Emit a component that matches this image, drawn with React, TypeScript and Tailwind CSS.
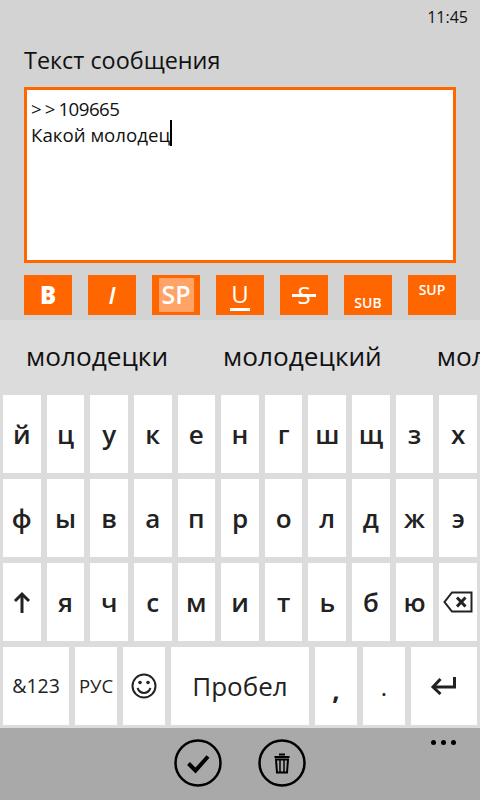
const rows = [
  ['й', 'ц', 'у', 'к', 'е', 'н', 'г', 'ш', 'щ', 'з', 'х'],
  ['ф', 'ы', 'в', 'а', 'п', 'р', 'о', 'л', 'д', 'ж', 'э'],
]
const row3 = ['я', 'ч', 'с', 'м', 'и', 'т', 'ь', 'б', 'ю']

function Key({ children, className = 'text-[26px] font-[550]' }: { children?: React.ReactNode; className?: string }) {
  return (
    <div className={`flex h-[78px] items-center justify-center bg-white leading-none text-[#222] ${className}`}>
      {children}
    </div>
  )
}

function ShiftIcon() {
  return (
    <svg width="18" height="22" viewBox="0 0 18 22" fill="none" stroke="#222" strokeWidth="3">
      <path d="M9 22V3" />
      <path d="M2 10l7-7 7 7" />
    </svg>
  )
}

function BackspaceIcon() {
  return (
    <svg width="30" height="22" viewBox="0 0 30 22" fill="none" stroke="#222" strokeWidth="2">
      <path d="M9 1.500H28.500V20.500H9L1.500 11z" />
      <path d="M14 6.500l8.500 9M22.500 6.500l-8.500 9" strokeWidth="3" />
    </svg>
  )
}

function SmileIcon() {
  return (
    <svg width="26" height="26" viewBox="0 0 26 26" fill="none" stroke="#222" strokeWidth="2">
      <circle cx="13" cy="13" r="11.500" />
      <path d="M6.500 15c1.500 3.500 4 5 6.500 5s5-1.500 6.500-5" />
      <circle cx="9" cy="9.500" r="1.800" fill="#222" stroke="none" />
      <circle cx="17" cy="9.500" r="1.800" fill="#222" stroke="none" />
    </svg>
  )
}

function EnterIcon() {
  return (
    <svg width="26" height="18" viewBox="0 0 26 18" fill="none" stroke="#222" strokeWidth="3">
      <path d="M24.500 0v10H3" />
      <path d="M10.500 2L3 10l7.500 7" />
    </svg>
  )
}

function CheckIcon() {
  return (
    <svg width="48" height="48" viewBox="0 0 48 48" fill="none" stroke="#000">
      <circle cx="24" cy="24" r="22.500" strokeWidth="2.500" />
      <path d="M14.500 24.500l7 7L34 17.500" strokeWidth="4" />
    </svg>
  )
}

function TrashIcon() {
  return (
    <svg width="48" height="48" viewBox="0 0 48 48" fill="none" stroke="#000">
      <circle cx="24" cy="24" r="22.500" strokeWidth="2.500" />
      <path d="M16.500 18h15M21 15.500h6" strokeWidth="2" />
      <path d="M18 20.500h12l-1 13h-10z" strokeWidth="2" />
      <path d="M22 21v12M26 21v12" strokeWidth="1.500" />
    </svg>
  )
}

export default function App() {
  return (
    <div className="flex h-[800px] w-[480px] flex-col overflow-hidden bg-[#d3d3d3] font-['Open_Sans',sans-serif] text-black">
      <div className="flex h-[32px] items-center justify-end pr-[12px] pt-[1px] text-[16px] text-[#111]">11:45</div>

      <div className="flex flex-1 flex-col px-[24px]">
        <div className="mt-[12px] h-[32px] text-[23.400px] leading-[32px] text-[#111]">Текст сообщения</div>
        <div className="mt-[11px] h-[176px] border-[3px] border-[#ff6600] bg-white px-[4px] py-[6px] text-[18.700px] leading-[26px] text-[#111]">
          <div>
            <span className="tracking-[3px]">&gt;&gt;</span>
            <span className="tracking-[-0.500px]">109665</span>
          </div>
          <div className="flex items-center">
            Какой молодец
            <span className="-mt-[4px] h-[26px] w-[2px] bg-black" />
          </div>
        </div>

        <div className="mt-[12px] flex justify-between">
          <div className="flex h-[40px] w-[48px] items-center justify-center bg-[#ff6600] text-[24px] font-extrabold text-white">B</div>
          <div className="flex h-[40px] w-[48px] items-center justify-center bg-[#ff6600] text-[24px] font-semibold italic text-white">I</div>
          <div className="flex h-[40px] w-[48px] items-center justify-center bg-[#ff6600]">
            <div className="flex h-[34px] w-[35px] items-center justify-center bg-white/40 text-[25px] font-semibold text-white">SP</div>
          </div>
          <div className="flex h-[40px] w-[48px] items-center justify-center bg-[#ff6600] text-[24px] font-medium text-white">
            <span className="border-b-[3px] border-white px-[1px] leading-[29px]">U</span>
          </div>
          <div className="relative flex h-[40px] w-[48px] items-center justify-center bg-[#ff6600] text-[24px] font-medium text-white">
            S
            <span className="absolute left-[12px] top-[19px] h-[3px] w-[24px] bg-white" />
          </div>
          <div className="flex h-[40px] w-[48px] items-end justify-center bg-[#ff6600] pb-[2px] text-[14px] font-semibold text-white">SUB</div>
          <div className="flex h-[40px] w-[48px] items-start justify-center bg-[#ff6600] pt-[4px] text-[14px] font-semibold text-white">SUP</div>
        </div>
      </div>

      <div className="flex h-[408px] flex-col bg-[#dcdcdc]">
        <div className="flex h-[75px] items-center gap-[55px] overflow-hidden whitespace-nowrap pb-[2px] pl-[26px] text-[26.200px] leading-none text-[#111]">
          <span>молодецки</span>
          <span>молодецкий</span>
          <span>мол</span>
        </div>
        <div className="flex flex-col gap-[6px] px-[3px]">
          {rows.map((row, i) => (
            <div key={i} className="grid grid-cols-11 gap-[6px]">
              {row.map((k) => (
                <Key key={k}>{k}</Key>
              ))}
            </div>
          ))}
          <div className="grid grid-cols-11 gap-[6px]">
            <Key><ShiftIcon /></Key>
            {row3.map((k) => (
              <Key key={k}>{k}</Key>
            ))}
            <Key><BackspaceIcon /></Key>
          </div>
          <div className="flex gap-[6px]">
            <Key className="w-[66px] text-[19.500px] font-medium">&amp;123</Key>
            <Key className="w-[42px] text-[18.500px] font-medium">РУС</Key>
            <Key className="w-[42px]"><SmileIcon /></Key>
            <Key className="w-[138px] text-[26px] font-medium">Пробел</Key>
            <Key className="w-[42px] pt-[8px] text-[26px] font-bold">,</Key>
            <Key className="w-[42px] pt-[2px] text-[24px] font-medium">.</Key>
            <Key className="w-[66px] pr-[2px]"><EnterIcon /></Key>
          </div>
        </div>
      </div>

      <div className="relative flex h-[72px] items-center justify-center gap-[36px] bg-[#a9a9a9] pb-[2px]">
        <CheckIcon />
        <TrashIcon />
        <div className="absolute right-[24px] top-[12px] flex gap-[5px]">
          <span className="h-[5px] w-[5px] rounded-full bg-black" />
          <span className="h-[5px] w-[5px] rounded-full bg-black" />
          <span className="h-[5px] w-[5px] rounded-full bg-black" />
        </div>
      </div>
    </div>
  )
}
